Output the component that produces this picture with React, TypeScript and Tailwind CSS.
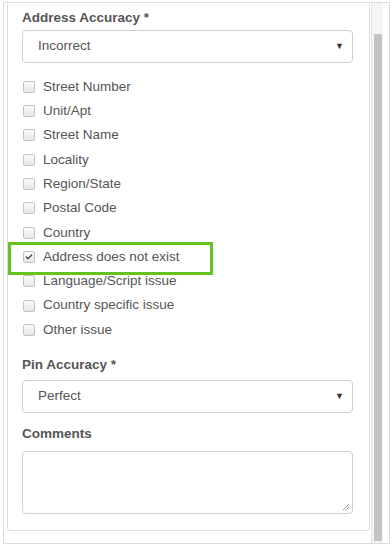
import { Check } from 'lucide-react'

const issues = [
  { label: 'Street Number' },
  { label: 'Unit/Apt' },
  { label: 'Street Name' },
  { label: 'Locality' },
  { label: 'Region/State' },
  { label: 'Postal Code' },
  { label: 'Country' },
  { label: 'Address does not exist', checked: true, highlight: true },
  { label: 'Language/Script issue' },
  { label: 'Country specific issue' },
  { label: 'Other issue' },
]

function Box({ checked }: { checked?: boolean }) {
  return (
    <span className="flex h-[12px] w-[12px] shrink-0 items-center justify-center rounded-[2px] border border-[#c4c4c4] bg-gradient-to-b from-[#fbfbfb] to-[#e6e6e6]">
      {checked && <Check className="h-[8px] w-[8px] text-[#444]" strokeWidth={4} />}
    </span>
  )
}

function Select({ value }: { value: string }) {
  return (
    <div className="flex h-[33px] items-center justify-between rounded-[4px] border border-[#cfcfcf] bg-white pl-[15px] pr-[8px] text-[13.5px] text-[#555]">
      <span>{value}</span>
      <span className="text-[9px] leading-none text-[#333]">▼</span>
    </div>
  )
}

export default function App() {
  return (
    <div className="h-[547px] w-[392px] bg-white pb-[3px] pl-[3px] pr-[2px] pt-[2px] font-['Liberation_Sans',Arial,sans-serif]">
      <div className="flex h-full overflow-hidden border border-[#d6dde5] bg-white">
        {/* Scrolled form panel */}
        <div className="flex flex-1 flex-col justify-end pb-[12px] pl-[3px]">
          <div className="rounded-b-[4px] border border-t-0 border-[#dcdcdc] pb-[16px] pl-[14px] pr-[16px] pt-[4px]">
            <div className="text-[13.5px] font-bold leading-[20px] text-[#555]">Address Accuracy *</div>
            <div className="mt-[2px]">
              <Select value="Incorrect" />
            </div>

            <ul className="mt-[12px]">
              {issues.map((it) => (
                <li key={it.label} className="relative flex h-[24.3px] items-center gap-[8px] pl-[1px] text-[13.5px] text-[#555]">
                  <Box checked={it.checked} />
                  <span>{it.label}</span>
                  {it.highlight && (
                    <span className="absolute left-[-14px] top-[-3px] h-[33px] w-[205px] border-[3px] border-[#66c21f]" />
                  )}
                </li>
              ))}
            </ul>

            <div className="mt-[13px] text-[13.5px] font-bold leading-[20px] text-[#555]">Pin Accuracy *</div>
            <div className="mt-[5px]">
              <Select value="Perfect" />
            </div>

            <div className="mt-[11px] text-[13.5px] font-bold leading-[20px] text-[#555]">Comments</div>
            <div className="relative mt-[7px] h-[63px] rounded-[4px] border border-[#cfcfcf] bg-white">
              <svg className="absolute bottom-[2px] right-[2px]" width="9" height="9" viewBox="0 0 9 9">
                <path d="M8 2 L2 8 M8 5 L5 8" stroke="#999" strokeWidth="1" />
              </svg>
            </div>
          </div>
        </div>

        {/* Scrollbar */}
        <div className="ml-[1px] mr-[6px] flex w-[12px] flex-col border-l border-[#e6e6e6] bg-[#f4f4f4] pb-[2px] pl-[2px] pr-[1px] pt-[31px]">
          <div className="flex-1 bg-[#c4c4c4]" />
        </div>
      </div>
    </div>
  )
}
